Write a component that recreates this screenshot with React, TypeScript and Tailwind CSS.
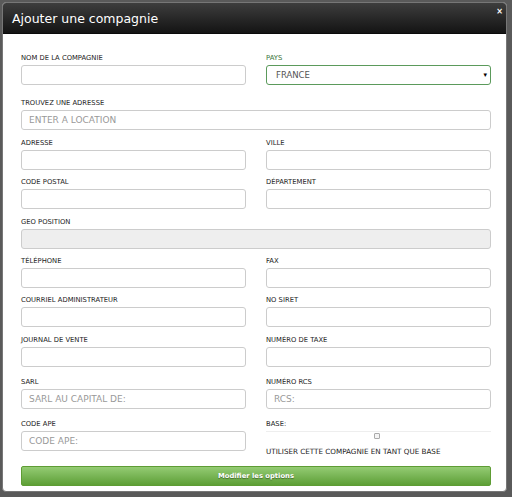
import React from "react";

const Label = ({ children, green }: { children: React.ReactNode; green?: boolean }) => (
  <div className={`h-[10px] leading-[10px] text-[6.8px] mb-[2px] whitespace-nowrap ${green ? "text-[#3c763d]" : "text-[#222]"}`}>
    {children}
  </div>
);

const Input = ({ placeholder, disabled }: { placeholder?: string; disabled?: boolean }) => (
  <input
    readOnly
    placeholder={placeholder}
    className={`block h-[20px] w-full rounded-[3px] border border-[#ccc] px-[7px] text-[9px] text-[#555] placeholder:text-[#999] outline-none ${disabled ? "bg-[#eee]" : "bg-white"}`}
  />
);

const Field = ({ label, placeholder, disabled }: { label: string; placeholder?: string; disabled?: boolean }) => (
  <div>
    <Label>{label}</Label>
    <Input placeholder={placeholder} disabled={disabled} />
  </div>
);

export default function App() {
  return (
    <div className="w-[512px] h-[497px] bg-[#5a5a5a] pl-[2px] pt-[2px] font-['DejaVu_Sans',sans-serif] overflow-hidden">
      <div className="w-[505px] h-[490px] rounded-[4px] border border-[#777] bg-white overflow-hidden flex flex-col">
        <div className="h-[31px] shrink-0 bg-gradient-to-b from-[#3e3e3e] to-[#141414] border-b border-[#0a0a0a] flex items-start justify-between pl-[9px] pr-[3px]">
          <div className="text-white text-[12.5px] leading-[31px]">Ajouter une compagnie</div>
          <div className="text-white text-[8px] font-bold leading-none mt-[5px]">×</div>
        </div>
        <div className="pl-[18px] pr-[15px] pt-[19px] flex flex-col">
          <div className="grid grid-cols-2 gap-x-[20px]">
            <Field label="NOM DE LA COMPAGNIE" />
            <div>
              <Label green>PAYS</Label>
              <div className="h-[20px] w-full rounded-[3px] border border-[#5b9a5b] px-[9px] flex items-center justify-between text-[8.5px] text-[#555]">
                <span>FRANCE</span>
                <span className="text-[7px] text-black -mr-[6px]">▾</span>
              </div>
            </div>
          </div>
          <div className="mt-[13px]">
            <Field label="TROUVEZ UNE ADRESSE" placeholder="ENTER A LOCATION" />
          </div>
          <div className="mt-[8px] grid grid-cols-2 gap-x-[20px] gap-y-[7px]">
            <Field label="ADRESSE" />
            <Field label="VILLE" />
            <Field label="CODE POSTAL" />
            <Field label="DÉPARTEMENT" />
          </div>
          <div className="mt-[8px]">
            <Field label="GEO POSITION" disabled />
          </div>
          <div className="mt-[7px] grid grid-cols-2 gap-x-[20px] gap-y-[7px]">
            <Field label="TÉLÉPHONE" />
            <Field label="FAX" />
            <Field label="COURRIEL ADMINISTRATEUR" />
            <Field label="NO SIRET" />
          </div>
          <div className="mt-[8px] grid grid-cols-2 gap-x-[20px]">
            <Field label="JOURNAL DE VENTE" />
            <Field label="NUMÉRO DE TAXE" />
          </div>
          <div className="mt-[10px] grid grid-cols-2 gap-x-[20px]">
            <div className="flex flex-col gap-[10px]">
              <Field label="SARL" placeholder="SARL AU CAPITAL DE:" />
              <Field label="CODE APE" placeholder="CODE APE:" />
            </div>
            <div className="flex flex-col">
              <Field label="NUMÉRO RCS" placeholder="RCS:" />
              <div className="mt-[10px]">
                <Label>BASE:</Label>
                <div className="border-t border-[#eee] flex justify-center pt-[1px]">
                  <div className="w-[6px] h-[6px] rounded-[1px] border border-[#aaa] bg-[#f4f4f4] ml-[-3px]" />
                </div>
                <div className="mt-[8px] text-[7.2px] leading-[10px] text-[#222] whitespace-nowrap">
                  UTILISER CETTE COMPAGNIE EN TANT QUE BASE
                </div>
              </div>
            </div>
          </div>
          <div className="mt-[9px] h-[20px] rounded-[2px] border border-[#5e9c34] bg-gradient-to-b from-[#94cb73] to-[#5d9f35] flex items-center justify-center text-white font-bold text-[6.8px] [text-shadow:0_1px_1px_rgba(0,0,0,0.4)]">
            Modifier les options
          </div>
        </div>
      </div>
    </div>
  );
}
